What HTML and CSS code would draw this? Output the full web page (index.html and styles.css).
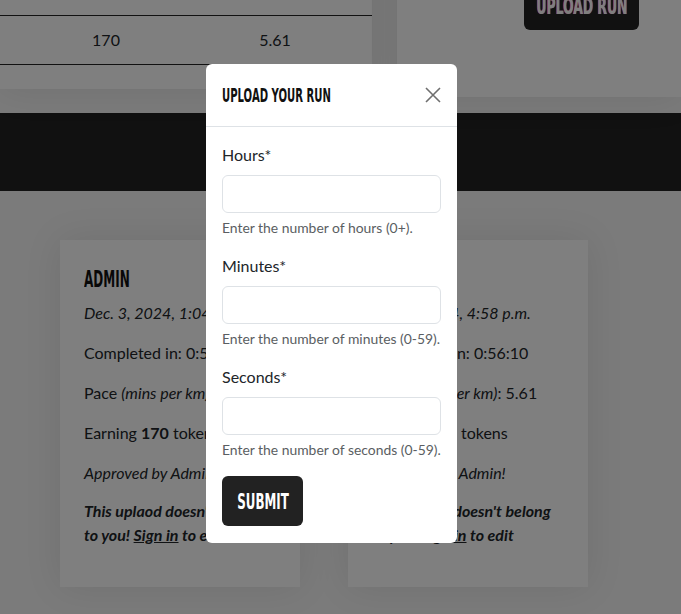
FILE: index.html
```html
<!DOCTYPE html>
<html lang="en">
<head>
<meta charset="utf-8">
<title>Runs</title>
<link rel="stylesheet" href="styles.css">
</head>
<body>
<div class="page">
  <div class="top-row">
    <section class="card table-card">
      <table class="runs">
        <thead><tr><th>Tokens</th><th>Pace</th></tr></thead>
        <tbody><tr><td>170</td><td>5.61</td></tr></tbody>
      </table>
    </section>
    <section class="card action-card">
      <button class="btn-dark btn-upload" type="button"><span class="display squeeze">UPLOAD RUN</span></button>
    </section>
  </div>
  <div class="band"></div>
  <div class="run-list">
    <article class="card run-card">
      <h2 class="run-user"><span class="display squeeze">ADMIN</span></h2>
      <p><em>Dec. 3, 2024, 1:04 p.m.</em></p>
      <p>Completed in: 0:56:10</p>
      <p>Pace <em>(mins per km)</em>: 5.61</p>
      <p>Earning <strong>170</strong> tokens</p>
      <p><em>Approved by Admin!</em></p>
      <p class="note"><strong><em>This uplaod doesn't belong to you! <a href="#">Sign in</a> to edit</em></strong></p>
    </article>
    <article class="card run-card">
      <h2 class="run-user"><span class="display squeeze">ADMIN</span></h2>
      <p><em>Dec. 3, 2024, 4:58 p.m.</em></p>
      <p>Completed in: 0:56:10</p>
      <p>Pace <em>(mins per km)</em>: 5.61</p>
      <p>Earning <strong>170</strong> tokens</p>
      <p><em>Approved by Admin!</em></p>
      <p class="note"><strong><em>This uplaod doesn't belong to you! <a href="#">Sign in</a> to edit</em></strong></p>
    </article>
  </div>
</div>

<div class="backdrop"></div>

<div class="modal">
  <div class="modal-header">
    <h1 class="modal-title"><span class="display squeeze">UPLOAD YOUR RUN</span></h1>
    <button class="btn-close" type="button" aria-label="Close">
      <svg width="16" height="16" viewBox="0 0 16 16"><path d="M1 1 L15 15 M15 1 L1 15" stroke="#6f6f6f" stroke-width="1.6" fill="none"/></svg>
    </button>
  </div>
  <form class="modal-body">
    <div class="field">
      <label class="field-label">Hours*</label>
      <input class="field-input" type="text">
      <div class="field-help">Enter the number of hours (0+).</div>
    </div>
    <div class="field">
      <label class="field-label">Minutes*</label>
      <input class="field-input" type="text">
      <div class="field-help">Enter the number of minutes (0-59).</div>
    </div>
    <div class="field">
      <label class="field-label">Seconds*</label>
      <input class="field-input" type="text">
      <div class="field-help">Enter the number of seconds (0-59).</div>
    </div>
    <button class="btn-dark btn-submit" type="button"><span class="display squeeze">SUBMIT</span></button>
  </form>
</div>
</body>
</html>
```

FILE: styles.css
```css
* { box-sizing: border-box; }

html, body {
  margin: 0;
  height: 100%;
  overflow: hidden;
}

body {
  background: #f6f6f6;
  font-family: Lato, "Liberation Sans", sans-serif;
  font-size: 16px;
  line-height: 1.5;
  color: #212529;
}

.display {
  font-family: "DejaVu Sans Condensed", "DejaVu Sans", sans-serif;
  font-weight: 700;
}

.squeeze {
  display: inline-block;
  white-space: nowrap;
  transform: scaleX(0.58);
  transform-origin: left center;
}

.card {
  background: #fff;
  box-shadow: 0 0 36px rgba(0, 0, 0, 0.09);
}

/* top row */
.top-row {
  display: flex;
  align-items: flex-start;
  gap: 25px;
  margin-top: -70px;
}

.table-card {
  width: 372px;
  flex: none;
  padding: 36px 0 24px;
}

.runs {
  width: 100%;
  border-collapse: collapse;
}

.runs th, .runs td {
  height: 49px;
  padding: 0;
  text-align: center;
  font-weight: 400;
  border-bottom: 1px solid #222;
}

.runs th:first-child, .runs td:first-child { width: 212px; }
.runs th:last-child, .runs td:last-child { width: 160px; padding-right: 34px; }

.action-card {
  flex: 1;
  padding: 52px 0 67px 127px;
}

.btn-dark {
  display: flex;
  align-items: center;
  justify-content: center;
  padding: 0;
  border: 0;
  border-radius: 6px;
  background: #222;
  color: #fff;
}

.btn-dark .squeeze {
  transform-origin: center center;
  transform: scaleX(0.6);
}

.btn-upload {
  width: 115px;
  height: 48px;
  font-size: 23px;
}

.btn-upload .display {
  text-shadow: -1px 0 #ff3030, 1px 0 #4080ff;
}

.band {
  margin-top: 16px;
  height: 78px;
  background: #222;
}

/* run cards */
.run-list {
  display: flex;
  gap: 48px;
  padding: 49px 0 0 60px;
}

.run-card {
  width: 240px;
  padding: 24px 24px 24px;
}

.run-user {
  margin: 0 0 7px;
  font-size: 23px;
  line-height: 29px;
  font-weight: 700;
  color: #111;
}

.run-user .squeeze {
  transform: scaleX(0.58);
}

.run-card p {
  margin: 0 0 16px;
}

.run-card .note {
  margin-top: -2px;
}

.run-card .note a {
  color: inherit;
}

/* modal */
.backdrop {
  position: fixed;
  inset: 0;
  background: rgba(0, 0, 0, 0.5);
}

.modal {
  position: fixed;
  left: 206px;
  top: 64px;
  width: 251px;
  background: #fff;
  border-radius: 6px;
  overflow: hidden;
}

.modal-header {
  display: flex;
  align-items: center;
  justify-content: space-between;
  padding: 16px;
  border-bottom: 1px solid #dee2e6;
}

.modal-title {
  margin: 0;
  font-size: 19px;
  line-height: 29px;
  color: #111;
}

.modal-title .squeeze {
  transform: scaleX(0.59);
}

.btn-close {
  width: 16px;
  height: 16px;
  padding: 0;
  border: 0;
  background: none;
  display: flex;
}

.modal-body {
  padding: 16px 16px 17px;
}

.field {
  margin-bottom: 16px;
}

.field-label {
  display: block;
  margin-bottom: 8px;
}

.field-input {
  display: block;
  width: 100%;
  height: 38px;
  border: 1px solid #dee2e6;
  border-radius: 6px;
  font: inherit;
  padding: 6px 12px;
}

.field-help {
  margin-top: 4px;
  font-size: 13.9px;
  line-height: 21px;
  color: #5a5e62;
  white-space: nowrap;
}

.btn-submit {
  width: 81px;
  height: 50px;
  font-size: 22px;
}
```
